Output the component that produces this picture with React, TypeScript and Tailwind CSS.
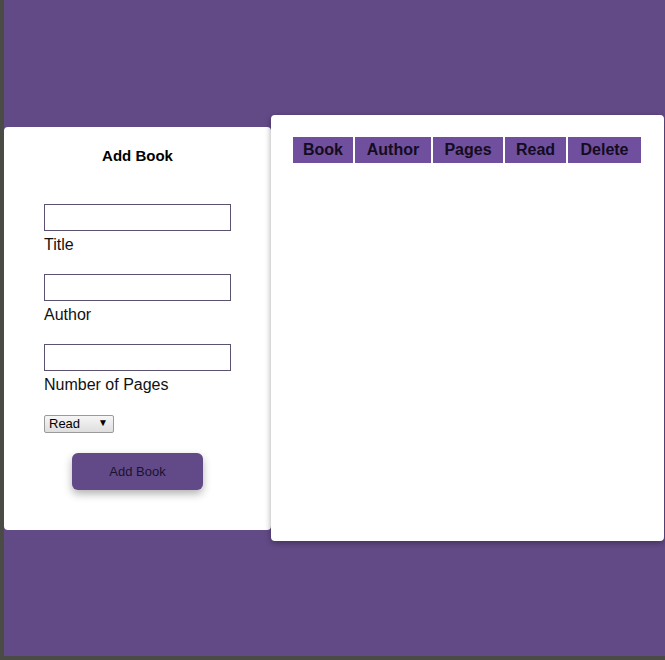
import React from 'react'

const fields = ['Title', 'Author', 'Number of Pages']

const columns = [
  { label: 'Book', w: 'w-[60px]' },
  { label: 'Author', w: 'w-[76px]' },
  { label: 'Pages', w: 'w-[70px]' },
  { label: 'Read', w: 'w-[61px]' },
  { label: 'Delete', w: 'w-[73px]' },
]

function AddBookForm() {
  return (
    <div className="mt-[127px] h-[403px] w-[267px] shrink-0 rounded bg-white">
      <div className="flex flex-col px-10 pt-[20px]">
        <h2 className="text-center text-[15px] font-bold leading-[18px] text-black">Add Book</h2>
        <div className="mt-[39px] flex flex-col gap-[20px]">
          {fields.map((f) => (
            <label key={f} className="flex flex-col">
              <input
                type="text"
                className="h-[27px] w-[187px] border border-[#5a5270] bg-white outline-none"
              />
              <span className="mt-[5px] text-[16px] leading-[18px] text-[#111]">{f}</span>
            </label>
          ))}
        </div>
        <div className="mt-[21px] flex">
          <div className="flex h-[18px] w-[70px] items-center justify-between rounded-[2px] border border-[#9a9a9a] bg-gradient-to-b from-[#f6f6f6] to-[#dedede] pl-[4px] pr-[5px] pb-[2px] text-[13px] leading-none text-black">
            <span>Read</span>
            <span className="text-[10px]">▼</span>
          </div>
        </div>
        <div className="mt-[20px] flex justify-center">
          <button className="h-[37px] w-[131px] rounded-[6px] bg-[#614a87] text-[13px] text-[#1c1230] shadow-[0_4px_8px_rgba(0,0,0,0.3)]">
            Add Book
          </button>
        </div>
      </div>
    </div>
  )
}

function BookTable() {
  return (
    <div className="mt-[115px] h-[426px] w-[393px] shrink-0 rounded bg-white p-[22px] shadow-[0_2px_6px_rgba(0,0,0,0.35)]">
      <div className="flex gap-[2px]">
        {columns.map((c) => (
          <div
            key={c.label}
            className={`${c.w} flex h-[26px] items-center justify-center bg-[#704f9e] text-[16px] font-bold text-[#140c20]`}
          >
            {c.label}
          </div>
        ))}
      </div>
    </div>
  )
}

export default function App() {
  return (
    <div
      className="h-[660px] w-[665px] overflow-hidden border-b-4 border-l-4 border-[#4b4b45] bg-[#624a87]"
      style={{ fontFamily: '"Liberation Sans", Arial, sans-serif' }}
    >
      <div className="flex items-start">
        <AddBookForm />
        <BookTable />
      </div>
    </div>
  )
}
